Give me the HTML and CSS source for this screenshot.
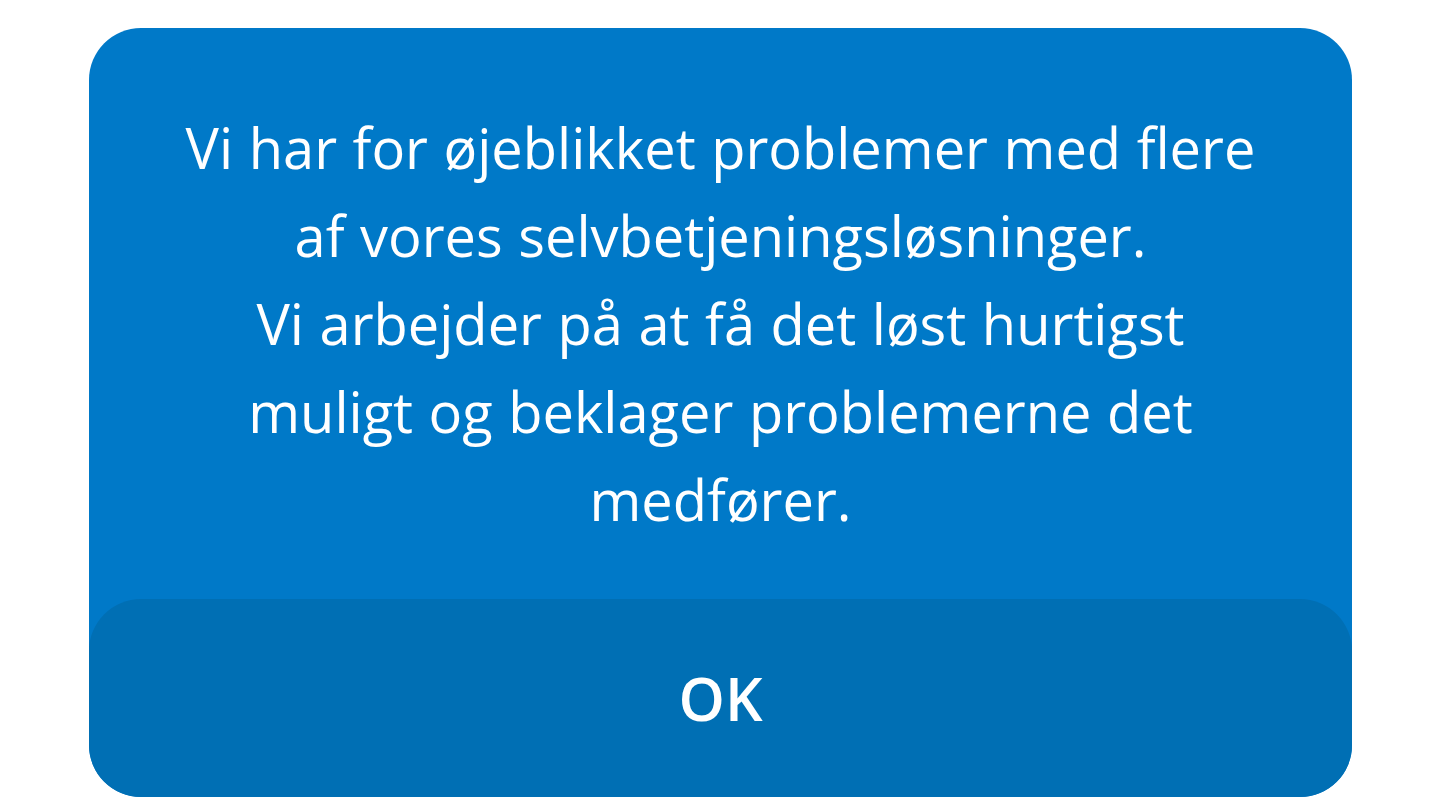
FILE: index.html
```html
<!DOCTYPE html>
<html lang="da">
<head>
<meta charset="utf-8">
<title>Besked</title>
<link rel="stylesheet" href="styles.css">
</head>
<body>
<div class="dialog">
  <div class="message">
    <p class="text">Vi har for øjeblikket problemer med flere<br>af vores selvbetjeningsløsninger.<br>Vi arbejder på at få det løst hurtigst<br>muligt og beklager problemerne det<br>medfører.</p>
  </div>
  <button class="ok">OK</button>
</div>
</body>
</html>
```

FILE: styles.css
```css
html, body {
  margin: 0;
  padding: 0;
  background: #ffffff;
}
body {
  padding: 28px 88px 14px 89px;
  font-family: "Open Sans", "Liberation Sans", sans-serif;
}
.dialog {
  width: 1263px;
  height: 769px;
  background: #0079c8;
  border-radius: 52px;
  display: flex;
  flex-direction: column;
  overflow: hidden;
}
.message {
  flex: 1;
  padding-top: 75px;
  text-align: center;
}
.text {
  margin: 0;
  color: #ffffff;
  font-size: 56px;
  line-height: 88px;
  letter-spacing: 0px;
  word-spacing: 1px;
}
.ok {
  height: 198px;
  flex: none;
  border: none;
  background: #006fb4;
  border-radius: 52px 52px 0 0;
  color: #ffffff;
  font-family: "Open Sans", "Liberation Sans", sans-serif;
  font-weight: 600;
  font-size: 59px;
  padding: 0;
}
```
